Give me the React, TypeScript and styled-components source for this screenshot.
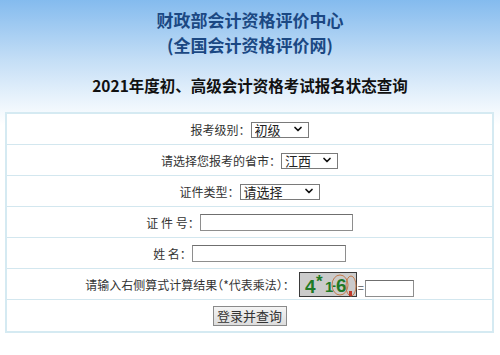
import React from 'react';
import styled, { createGlobalStyle } from 'styled-components';
import { ChevronDown } from 'lucide-react';

const GlobalStyle = createGlobalStyle`
  html, body {
    margin: 0;
    padding: 0;
    background: #ffffff;
    font-family: "Noto Sans CJK SC", "Noto Sans", "Liberation Sans", sans-serif;
    color: #222;
  }
`;

const Page = styled.div`
  width: 500px;
  min-height: 355px;
  background: linear-gradient(to bottom, #84bbee 0px, #c4def6 60px, #eef6fd 105px, #ffffff 125px);
  padding-top: 7px;
  box-sizing: border-box;
`;

const Header = styled.header`
  text-align: center;
`;

const Title = styled.div`
  font-size: 17px;
  font-weight: 700;
  line-height: 25px;
  color: #1b4883;
`;

const Heading = styled.h1`
  margin: 17px 0 16px;
  font-size: 15.5px;
  font-weight: 700;
  line-height: 22px;
  color: #111;
`;

const FormTable = styled.div`
  margin: 0 6px 0 5px;
  border: 2px solid #d5eaf2;
  background: #ffffff;
`;

const Row = styled.div<{ $last?: boolean }>`
  display: flex;
  align-items: center;
  justify-content: center;
  gap: 6px;
  height: 31px;
  box-sizing: border-box;
  border-bottom: ${(p) => (p.$last ? 'none' : '1px solid #d3e7ef')};
  font-size: 12px;
  color: #333;
`;

const Label = styled.span`
  white-space: pre;
  font-feature-settings: 'halt';
`;

const SelectWrap = styled.span<{ $width: number }>`
  position: relative;
  display: inline-block;
  width: ${(p) => p.$width}px;
  height: 16px;
`;

const Select = styled.select`
  appearance: none;
  width: 100%;
  height: 100%;
  box-sizing: border-box;
  margin: 0;
  padding: 0 0 0 3px;
  border: 1px solid #7a7a7a;
  border-radius: 0;
  background: #fff;
  font-family: inherit;
  font-size: 13px;
  line-height: 14px;
  color: #222;
  outline: none;
`;

const Arrow = styled(ChevronDown)`
  position: absolute;
  right: 5px;
  top: 2px;
  pointer-events: none;
`;

const TextInput = styled.input<{ $width: number }>`
  width: ${(p) => p.$width}px;
  height: 17px;
  box-sizing: border-box;
  margin: 0;
  padding: 0 2px;
  border: 1px solid #8e8e8e;
  border-top-color: #6f6f6f;
  background: #fff;
  font-size: 12px;
  outline: none;
`;

const CaptchaGroup = styled.span`
  display: inline-flex;
  align-items: flex-end;
  margin-left: 4px;
`;

const Equals = styled.span`
  font-size: 11px;
  color: #555;
  padding: 0 1px 2px;
`;

const SubmitButton = styled.button`
  height: 20px;
  width: 74px;
  padding: 0;
  border: 1px solid #8a8a8a;
  background: linear-gradient(to bottom, #f4f4f4, #dcdcdc);
  font-family: inherit;
  font-size: 13px;
  line-height: 16px;
  color: #333;
`;

function Dropdown({ width, value, options }: { width: number; value: string; options: string[] }) {
  return (
    <SelectWrap $width={width}>
      <Select defaultValue={value}>
        {options.map((o) => (
          <option key={o}>{o}</option>
        ))}
      </Select>
      <Arrow size={12} strokeWidth={3.5} color="#111" />
    </SelectWrap>
  );
}

function Captcha() {
  const font = 'Liberation Sans, sans-serif';
  return (
    <svg width="58" height="25" viewBox="0 0 58 25">
      <rect x="0.5" y="0.5" width="57" height="24" fill="#cbcbcb" stroke="#3a3a3a" />
      <text x="6" y="21" fontSize="19" fontWeight="700" fill="#1f7a26" fontFamily={font}>4</text>
      <text x="17" y="15" fontSize="17" fontWeight="700" fill="#1f7a26" fontFamily={font}>*</text>
      <text x="26" y="20" fontSize="15" fontWeight="700" fill="#1f7a26" fontFamily={font}>1</text>
      <text x="33" y="18" fontSize="12" fontWeight="700" fill="#1f7a26" fontFamily={font}>-</text>
      <text x="37" y="20" fontSize="19" fontWeight="700" fill="#1f7a26" fontFamily={font}>6</text>
      <ellipse cx="41" cy="13" rx="8" ry="10" fill="none" stroke="#c47a4a" strokeWidth="1" />
      <ellipse cx="52" cy="14" rx="5" ry="10" fill="none" stroke="#c47a4a" strokeWidth="1" />
      <rect x="50" y="19" width="3" height="5" fill="#c0392b" />
    </svg>
  );
}

export default function App() {
  return (
    <>
      <GlobalStyle />
      <Page>
        <Header>
          <Title>财政部会计资格评价中心</Title>
          <Title>(全国会计资格评价网)</Title>
          <Heading>2021年度初、高级会计资格考试报名状态查询</Heading>
        </Header>
        <FormTable>
          <Row>
            <Label>报考级别：</Label>
            <Dropdown width={58} value="初级" options={['初级', '高级']} />
          </Row>
          <Row>
            <Label>请选择您报考的省市：</Label>
            <Dropdown width={57} value="江西" options={['江西']} />
          </Row>
          <Row>
            <Label>证件类型：</Label>
            <Dropdown width={80} value="请选择" options={['请选择', '身份证']} />
          </Row>
          <Row>
            <Label>证 件 号：</Label>
            <TextInput $width={153} />
          </Row>
          <Row>
            <Label>姓 名：</Label>
            <TextInput $width={154} />
          </Row>
          <Row>
            <Label>请输入右侧算式计算结果（*代表乘法）：</Label>
            <CaptchaGroup>
              <Captcha />
              <Equals>=</Equals>
              <TextInput $width={49} />
            </CaptchaGroup>
          </Row>
          <Row $last>
            <SubmitButton>登录并查询</SubmitButton>
          </Row>
        </FormTable>
      </Page>
    </>
  );
}
